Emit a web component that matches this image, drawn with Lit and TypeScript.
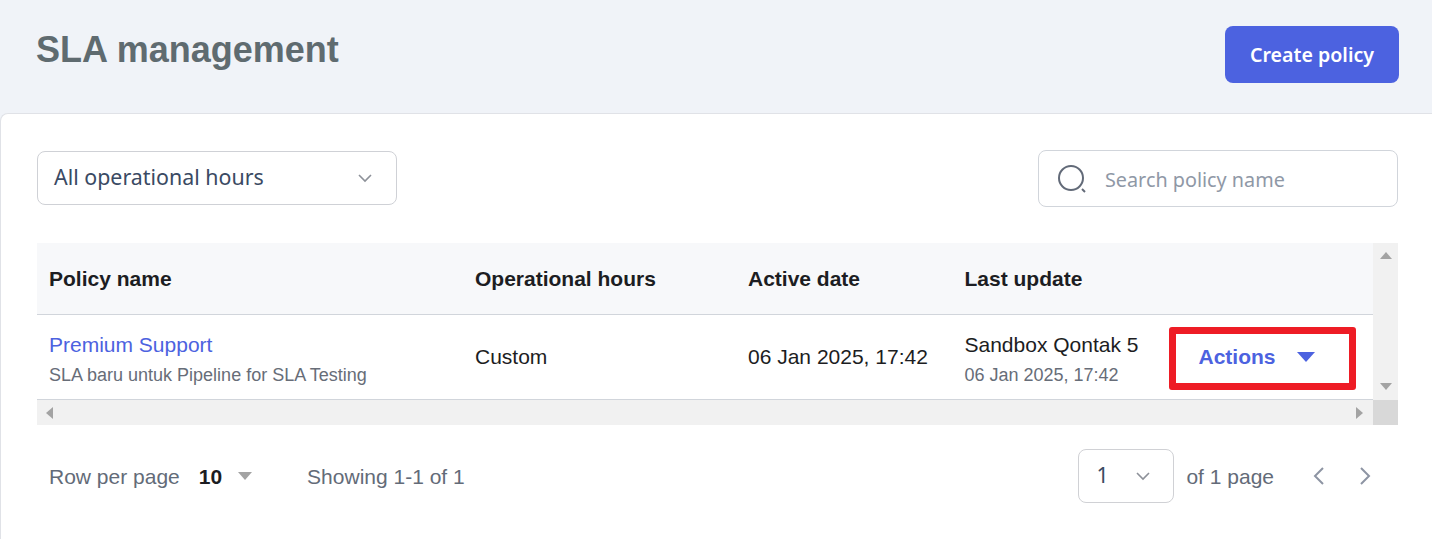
import { LitElement, html, css } from "lit";
import { customElement } from "lit/decorators.js";

const chevron = html`<svg width="16" height="10" viewBox="0 0 16 10"><path d="M2 2l6 6 6-6" fill="none" stroke="#8d9199" stroke-width="1.6"/></svg>`;

@customElement("app-root")
export class AppRoot extends LitElement {
  static styles = css`
    :host { display: block; width: 1432px; height: 539px; overflow: hidden; background: #f0f3f8; font-family: "Liberation Sans", Arial, sans-serif; }
    .top { height: 113px; box-sizing: border-box; display: flex; justify-content: space-between; align-items: flex-start; padding: 26px 33px 0 36px; }
    h1 { margin: 5px 0 0; font-size: 36px; line-height: 38px; font-weight: 700; color: #5f6b70; }
    .create { width: 174px; height: 57px; border: 0; border-radius: 8px; background: #4c62e0; color: #fff; font: 600 19.6px "Noto Sans", sans-serif; padding: 0; }
    .card { height: 426px; box-sizing: border-box; background: #fff; border: 1px solid #e0e2e7; border-width: 1px 0 0 1px; border-top-left-radius: 8px; padding: 36px 34px 0 36px; }
    .filters { display: flex; justify-content: space-between; align-items: flex-start; height: 93px; }
    .select { margin-top: 1px; width: 360px; height: 54px; box-sizing: border-box; border: 1px solid #cfd1d6; border-radius: 8px; display: flex; align-items: center; justify-content: space-between; padding: 0 23px 0 16px; font: 400 21.4px "Noto Sans", sans-serif; color: #3a4a63; }
    .select span { padding-bottom: 4px; }
    .search { width: 360px; height: 57px; box-sizing: border-box; border: 1px solid #d1d5db; border-radius: 8px; display: flex; align-items: center; gap: 18px; padding: 0 0 0 18px; font: 400 19.8px "Noto Sans", sans-serif; color: #8f98a6; }
    .search span { padding-top: 2px; }
    .wrap { width: 1361px; height: 182px; display: grid; grid-template-columns: 1336px 25px; grid-template-rows: 157px 25px; }
    .head, .row { display: grid; grid-template-columns: 426px 273px 216.5px 205px 1fr; align-items: center; }
    .head { height: 71px; box-sizing: content-box; background: #f7f8fa; border-bottom: 1px solid #d1d5db; font-size: 21px; font-weight: 700; color: #1c1d22; }
    .head .cell { padding-top: 1px; }
    .row { height: 84px; border-bottom: 1px solid #d1d5db; font-size: 21px; color: #1c1d22; }
    .cell { padding-left: 12px; min-width: 0; white-space: nowrap; }
    .stack { padding-top: 6px; }
    .link { color: #4c62e0; line-height: 26px; }
    .name { line-height: 26px; }
    .sub { font-size: 18px; color: #676d78; line-height: 26px; margin-top: 4px; }
    .actions { width: 187px; height: 63px; box-sizing: border-box; margin: 2px 0 0 11px; border: 7px solid #ee1c25; border-radius: 3px; display: flex; align-items: center; padding: 0 0 2px 23px; gap: 21px; color: #4c62e0; font-weight: 700; font-size: 21px; }
    .vbar { background: #f1f1f1; display: flex; flex-direction: column; justify-content: space-between; align-items: center; padding: 9px 0 10px; }
    .hbar { background: #f1f1f1; display: flex; justify-content: space-between; align-items: center; padding: 0 10px 0 9px; }
    .corner { background: #d8d8d8; }
    .pager { display: flex; align-items: center; justify-content: space-between; height: 60px; margin-top: 21px; padding-left: 12px; font-size: 21px; color: #636b78; }
    .left, .right { display: flex; align-items: center; }
    .left span, .of { padding-top: 2px; }
    .ten { font-weight: 700; color: #1c1d22; margin: 0 16px 0 19px; }
    .showing { margin-left: 55px; }
    .page { width: 96px; height: 54px; box-sizing: border-box; border: 1px solid #d0d1d5; border-radius: 8px; display: flex; align-items: center; justify-content: space-between; padding: 0 22px 0 17px; color: #3a4a63; font: 400 21.4px "Noto Sans", sans-serif; }
    .page span { padding-bottom: 4px; }
    .of { margin-left: 12px; }
    .nav { margin-left: 38px; display: flex; gap: 32px; padding-right: 26px; }
    svg { display: block; flex: none; }
  `;

  render() {
    return html`
      <div class="top">
        <h1>SLA management</h1>
        <button class="create">Create policy</button>
      </div>
      <div class="card">
        <div class="filters">
          <div class="select"><span>All operational hours</span>${chevron}</div>
          <div class="search">
            <svg width="30" height="30" viewBox="0 0 30 30"><circle cx="14" cy="14" r="12" fill="none" stroke="#626a78" stroke-width="2"/><path d="M25 25l3 3" stroke="#626a78" stroke-width="2"/></svg>
            <span>Search policy name</span>
          </div>
        </div>
        <div class="wrap">
          <div>
            <div class="head">
              <div class="cell">Policy name</div>
              <div class="cell">Operational hours</div>
              <div class="cell">Active date</div>
              <div class="cell">Last update</div>
              <div></div>
            </div>
            <div class="row">
              <div class="cell stack"><div class="link">Premium Support</div><div class="sub">SLA baru untuk Pipeline for SLA Testing</div></div>
              <div class="cell">Custom</div>
              <div class="cell">06 Jan 2025, 17:42</div>
              <div class="cell stack"><div class="name">Sandbox Qontak 5</div><div class="sub">06 Jan 2025, 17:42</div></div>
              <div>
                <div class="actions"><span>Actions</span><svg width="18" height="10" viewBox="0 0 18 10"><path d="M0 0h18l-9 10z" fill="#4c62e0"/></svg></div>
              </div>
            </div>
          </div>
          <div class="vbar">
            <svg width="12" height="7" viewBox="0 0 12 7"><path d="M0 7l6-7 6 7z" fill="#a3a3a3"/></svg>
            <svg width="12" height="7" viewBox="0 0 12 7"><path d="M0 0l6 7 6-7z" fill="#a3a3a3"/></svg>
          </div>
          <div class="hbar">
            <svg width="7" height="12" viewBox="0 0 7 12"><path d="M7 0L0 6l7 6z" fill="#a3a3a3"/></svg>
            <svg width="7" height="12" viewBox="0 0 7 12"><path d="M0 0l7 6-7 6z" fill="#a3a3a3"/></svg>
          </div>
          <div class="corner"></div>
        </div>
        <div class="pager">
          <div class="left">
            <span>Row per page</span>
            <span class="ten">10</span>
            <svg width="14" height="8" viewBox="0 0 14 8"><path d="M0 0h14L7 8z" fill="#a3a3a3"/></svg>
            <span class="showing">Showing 1-1 of 1</span>
          </div>
          <div class="right">
            <div class="page"><span>1</span>${chevron}</div>
            <span class="of">of 1 page</span>
            <div class="nav">
              <svg width="14" height="20" viewBox="0 0 14 20"><path d="M11 2L3 10l8 8" fill="none" stroke="#8d94a3" stroke-width="2"/></svg>
              <svg width="14" height="20" viewBox="0 0 14 20"><path d="M3 2l8 8-8 8" fill="none" stroke="#8d94a3" stroke-width="2"/></svg>
            </div>
          </div>
        </div>
      </div>
    `;
  }
}
